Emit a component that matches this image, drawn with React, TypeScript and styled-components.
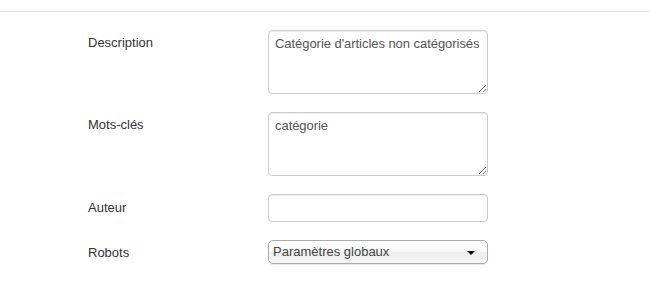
import React from "react";
import styled, { createGlobalStyle } from "styled-components";

const GlobalStyle = createGlobalStyle`
  body {
    margin: 0;
    background: #fff;
    font-family: "Liberation Sans", Arial, Helvetica, sans-serif;
    font-size: 13px;
    line-height: 18px;
    color: #333;
  }
`;

const Divider = styled.div`
  margin-top: 11px;
  border-top: 1px solid #e3e3e3;
`;

const Form = styled.div`
  padding: 18px 0 0 88px;
`;

const Row = styled.div`
  display: grid;
  grid-template-columns: 180px 220px;
  margin-bottom: 18px;
`;

const Label = styled.label<{ $top: number }>`
  padding-top: ${(p) => p.$top}px;
  color: #333;
`;

const TextArea = styled.textarea`
  box-sizing: border-box;
  width: 220px;
  height: 64px;
  margin: 0;
  padding: 4px 1px 4px 6px;
  border: 1px solid #ccc;
  border-radius: 4px;
  box-shadow: inset 0 1px 1px rgba(0, 0, 0, 0.075);
  font-family: inherit;
  font-size: 13px;
  line-height: 18px;
  letter-spacing: -0.05px;
  color: #555;
  outline: none;
  overflow: hidden;
`;

const TextInput = styled.input`
  box-sizing: border-box;
  width: 220px;
  height: 28px;
  margin: 0;
  padding: 4px 6px;
  border: 1px solid #ccc;
  border-radius: 4px;
  box-shadow: inset 0 1px 1px rgba(0, 0, 0, 0.075);
  font-family: inherit;
  font-size: 13px;
  color: #555;
  outline: none;
`;

const Select = styled.div`
  box-sizing: border-box;
  width: 220px;
  height: 24px;
  display: flex;
  align-items: center;
  justify-content: space-between;
  padding: 0 12px 0 4px;
  border: 1px solid #aaa;
  border-radius: 5px;
  background: linear-gradient(#ffffff 20%, #f6f6f6 50%, #eeeeee 52%, #f4f4f4 100%);
  box-shadow: inset 0 0 3px #fff, 0 1px 1px rgba(0, 0, 0, 0.1);
  color: #444;
  line-height: 22px;
`;

const Caret = styled.span`
  width: 0;
  height: 0;
  margin-top: 2px;
  border-left: 4px solid transparent;
  border-right: 4px solid transparent;
  border-top: 4px solid #000;
`;

export default function App() {
  return (
    <>
      <GlobalStyle />
      <Divider />
      <Form>
        <Row>
          <Label $top={4}>Description</Label>
          <TextArea readOnly defaultValue="Catégorie d'articles non catégorisés" />
        </Row>
        <Row>
          <Label $top={4}>Mots-clés</Label>
          <TextArea readOnly defaultValue="catégorie" />
        </Row>
        <Row>
          <Label $top={5}>Auteur</Label>
          <TextInput readOnly defaultValue="" />
        </Row>
        <Row>
          <Label $top={4}>Robots</Label>
          <Select>
            <span>Paramètres globaux</span>
            <Caret />
          </Select>
        </Row>
      </Form>
    </>
  );
}
